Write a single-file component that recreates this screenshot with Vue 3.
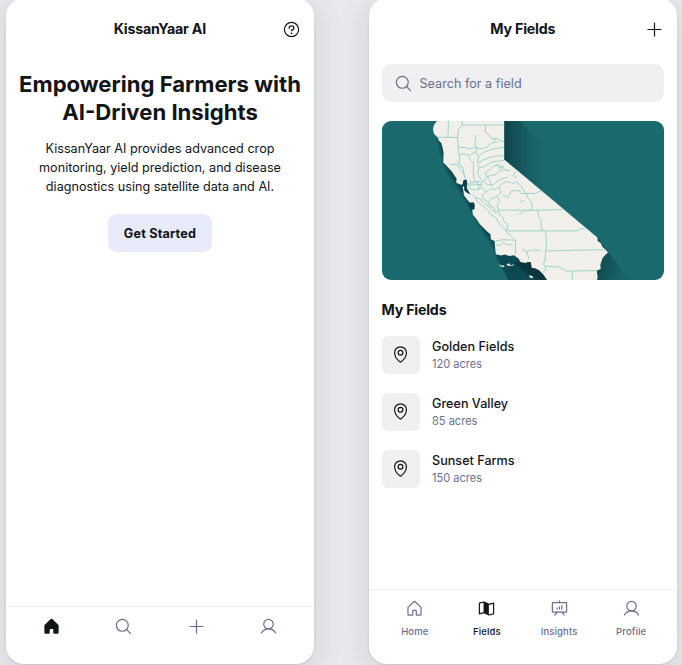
<script setup>
const fields = [
  { name: 'Golden Fields', size: '120 acres' },
  { name: 'Green Valley', size: '85 acres' },
  { name: 'Sunset Farms', size: '150 acres' },
]

// County borders, in the coordinate space of the map illustration
const borders = [
  'M220 18L218 67', 'M188 67H249', 'M262 18L259 34L250 42L247 65L249 100L254 135L252 145L263 160L270 190',
  'M259 30H387', 'M249 97H270L280 102L301 97', 'M301 60L302 75L298 86L305 98L302 110L310 125L307 145L312 158',
  'M331 30V52L343 62L350 72L366 70L377 78L387 80', 'M301 98L318 101L332 98L352 83L368 80',
  'M310 125L324 112L340 107L355 101L387 97', 'M311 143L326 134L345 126L364 123L387 122',
  'M312 158L329 154L344 144L362 138L387 136', 'M253 120L265 116L280 121L302 111',
  'M280 121L285 133L295 143L294 174L298 199', 'M225 148H246L252 161L263 170L270 190',
  'M246 137L262 160', 'M298 199H318L320 217L306 225L283 220L278 207L298 199L310 205V225',
  'M283 195L298 207L318 209', 'M312 158L306 174L316 190L325 199L336 185L329 174L343 165L355 153L369 150L387 160',
  'M325 199L335 207L347 211L359 205L371 195L388 189L398 186', 'M336 185L350 180L362 178L373 168L382 164L395 165L405 167',
  'M320 217L332 230L321 242L324 250L340 263L345 273L358 279L359 291L370 291',
  'M332 230L347 221L359 223L371 216L382 205L397 199L414 205L423 199L435 210L445 224L455 239L460 251L469 260L472 283',
  'M371 216L377 233L366 243L373 256L366 270L370 285H472', 'M382 240L399 247L407 230L419 225L436 228',
  'M435 235H481L490 230L498 228', 'M290 238L299 247L315 251L326 264L340 273L355 290',
  'M299 247L310 263L324 274L337 285L348 299L364 309L372 324L386 337L394 350L407 361L421 376V418',
  'M370 285L373 299L382 305L386 318L394 324L398 335L394 347H512', 'M432 296L440 292L448 286L562 283',
  'M488 283L490 302L498 315V331L502 347', 'M512 347H608L614 341H629', 'M512 347L514 384L510 435L505 446L513 460L505 471',
  'M362 377L378 374H407L421 376', 'M362 391L376 389L386 381L394 387L412 389', 'M512 407L690 403',
  'M510 453L553 455L572 467L665 466', 'M592 467V494', 'M441 401L456 410L461 431', 'M456 408L473 405H495',
  'M353 83L362 72', 'M366 145L373 160L387 151', 'M422 168L414 181L426 190', 'M435 260L448 255',
  'M336 185L345 199L347 211', 'M340 263L346 253L366 243', 'M279 207L291 211L302 207',
]
</script>

<template>
  <main class="canvas">
    <section class="phone">
      <header class="topbar">
        <h2 class="title">KissanYaar AI</h2>
        <svg class="icon action" viewBox="0 0 256 256">
          <circle cx="128" cy="128" r="96" />
          <circle class="solid" cx="128" cy="180" r="12" />
          <path d="M128 144v-8c17.670 0 32-12.540 32-28s-14.330-28-32-28-32 12.540-32 28v4" />
        </svg>
      </header>
      <h1 class="headline">Empowering Farmers with<br />AI-Driven Insights</h1>
      <p class="intro">KissanYaar AI provides advanced crop<br />monitoring, yield prediction, and disease<br />diagnostics using satellite data and AI.</p>
      <button class="cta">Get Started</button>
      <nav class="tabs compact">
        <div class="tab active">
          <svg class="icon filled" viewBox="0 0 256 256"><path d="M224 115.550V208a16 16 0 0 1-16 16h-40a16 16 0 0 1-16-16v-40a8 8 0 0 0-8-8h-32a8 8 0 0 0-8 8v40a16 16 0 0 1-16 16H48a16 16 0 0 1-16-16v-92.450a16 16 0 0 1 5.170-11.780l80-75.480a16 16 0 0 1 21.530 0l80 75.480A16 16 0 0 1 224 115.550Z" /></svg>
        </div>
        <div class="tab">
          <svg class="icon" viewBox="0 0 256 256"><circle cx="112" cy="112" r="80" /><path d="M168.570 168.570L224 224" /></svg>
        </div>
        <div class="tab">
          <svg class="icon" viewBox="0 0 256 256"><path d="M40 128H216M128 40V216" /></svg>
        </div>
        <div class="tab">
          <svg class="icon" viewBox="0 0 256 256"><circle cx="128" cy="96" r="64" /><path d="M32 216c19.370-33.470 54.550-56 96-56s76.630 22.530 96 56" /></svg>
        </div>
      </nav>
    </section>

    <section class="phone">
      <header class="topbar">
        <h2 class="title">My Fields</h2>
        <svg class="icon action" viewBox="0 0 256 256"><path d="M40 128H216M128 40V216" /></svg>
      </header>
      <div class="search">
        <svg class="icon" viewBox="0 0 256 256"><circle cx="112" cy="112" r="80" /><path d="M168.570 168.570L224 224" /></svg>
        <span>Search for a field</span>
      </div>
      <svg class="map" viewBox="20 18 849 476" preserveAspectRatio="none">
        <defs>
          <linearGradient id="eastShade" gradientUnits="userSpaceOnUse" x1="387" y1="0" x2="510" y2="0">
            <stop offset="0" stop-color="#0e444a" />
            <stop offset="0.25" stop-color="#145055" />
            <stop offset="0.6" stop-color="#186065" />
            <stop offset="1" stop-color="#19696d" />
          </linearGradient>
          <linearGradient id="southShade" gradientUnits="userSpaceOnUse" x1="665" y1="440" x2="755" y2="470">
            <stop offset="0" stop-color="#0f484e" />
            <stop offset="1" stop-color="#19666a" />
          </linearGradient>
          <filter id="soft" x="-10%" y="-10%" width="120%" height="120%"><feGaussianBlur stdDeviation="3" /></filter>
        </defs>
        <rect x="20" y="18" width="849" height="476" fill="#19696d" />
        <path d="M387 18H435L505 90V250L387 145Z" fill="url(#eastShade)" />
        <path d="M667 367L762 494H660Z" fill="url(#southShade)" />
        <path d="M184 62L209 155L244 212L275 258L306 321L353 390L372 440V330L270 190L205 90Z" fill="#0b3e46" opacity="0.75" filter="url(#soft)" />
        <path d="M358 400L372 440L400 494H520V400Z" fill="#0e4850" />
        <path d="M418 440L480 494H520V445Z" fill="#07363e" filter="url(#soft)" />
        <path d="M265 190H290V242L303 262V287L287 283L260 225Z" fill="#073e48" />
        <path
          fill="#f0efea"
          d="M185 18L176 30L173 42L176 56L188 68L190 76L198 84L202 98L205 112L204 142L212 150L222 161L231 171L238 182L244 190L243 203L255 208H262L265 195L274 193L276 202L275 219L281 230L286 238L275 233L267 225V214L262 214L264 224L266 240L276 254L283 262H296L299 270L297 284L291 283L293 299L304 312L314 327L324 337L334 347L346 357L347 372L358 377L360 400L362 417L378 421L388 418L403 422L416 420L430 430L436 440L452 443L457 440H467L470 458L480 459L492 465L505 478L516 494H666L668 485L665 466L677 461L676 449L682 430L690 420L699 412L690 401L683 395L677 383L668 377L667 367L435 173L387 133V18Z"
        />
        <path d="M370 447L380 451L387 450V455L378 454ZM393 449L401 444L407 450L416 447L414 451L399 451ZM461 480L471 482L475 489L465 487Z" fill="#f0efea" />
        <g class="borders"><path v-for="d in borders" :key="d" :d="d" /></g>
      </svg>
      <h3 class="section-title">My Fields</h3>
      <ul class="list">
        <li v-for="field in fields" :key="field.name" class="item">
          <div class="pin">
            <svg class="icon" viewBox="0 0 256 256"><circle cx="128" cy="104" r="32" /><path d="M208 104c0 72-80 128-80 128s-80-56-80-128a80 80 0 0 1 160 0Z" /></svg>
          </div>
          <div class="meta">
            <span class="name">{{ field.name }}</span>
            <span class="size">{{ field.size }}</span>
          </div>
        </li>
      </ul>
      <nav class="tabs">
        <div class="tab">
          <svg class="icon" viewBox="0 0 256 256"><path d="M152 208v-48a8 8 0 0 0-8-8h-32a8 8 0 0 0-8 8v48a8 8 0 0 1-8 8H48a8 8 0 0 1-8-8v-92.450a8 8 0 0 1 2.620-5.920l80-75.540a8 8 0 0 1 10.770 0l80 75.540a8 8 0 0 1 2.620 5.920V208a8 8 0 0 1-8 8h-48a8 8 0 0 1-8-8Z" /></svg>
          <span>Home</span>
        </div>
        <div class="tab active">
          <svg class="icon" viewBox="0 0 256 256"><path d="M96 184L32 200V56L96 40L160 72L224 56V200L160 216ZM96 40V184" /><path class="solid" d="M96 40L160 72V216L96 184Z" /></svg>
          <span>Fields</span>
        </div>
        <div class="tab">
          <svg class="icon" viewBox="0 0 256 256"><rect x="32" y="48" width="192" height="128" rx="8" /><path d="M160 176L192 216M96 176L64 216M96 120V136M128 104V136M160 88V136M128 48V24" /></svg>
          <span>Insights</span>
        </div>
        <div class="tab">
          <svg class="icon" viewBox="0 0 256 256"><circle cx="128" cy="96" r="64" /><path d="M32 216c19.370-33.470 54.550-56 96-56s76.630 22.530 96 56" /></svg>
          <span>Profile</span>
        </div>
      </nav>
    </section>
  </main>
</template>

<style>
body {
  margin: 0;
  background: #e8e9ed;
}
</style>

<style scoped>
* {
  box-sizing: border-box;
}
.canvas {
  display: flex;
  gap: 55px;
  width: 682px;
  height: 665px;
  padding-left: 6px;
  overflow: hidden;
  background: #e8e9ed;
  color: #121417;
  font-family: Inter, sans-serif;
}
.phone {
  display: flex;
  flex-direction: column;
  flex: none;
  width: 308px;
  height: 666px;
  margin-top: -2px;
  border-radius: 18px;
  background: #fff;
  box-shadow: 0 6px 30px rgba(30, 32, 50, 0.13), 0 1px 2px rgba(30, 32, 50, 0.1);
}
.icon {
  display: block;
  flex: none;
  width: 19px;
  height: 19px;
  fill: none;
  stroke: currentColor;
  stroke-width: 16;
  stroke-linecap: round;
  stroke-linejoin: round;
}
.filled,
.solid {
  fill: currentColor;
  stroke: none;
}
.topbar {
  display: grid;
  grid-template-columns: 38px 1fr 38px;
  align-items: center;
  height: 57px;
  padding: 6px 3.2px 0 2.8px;
}
.title {
  grid-column: 2;
  margin: 0 0 2px;
  text-align: center;
  font-size: 14.22px;
  font-weight: 700;
  line-height: 18px;
  letter-spacing: -0.21px;
}
.action {
  justify-self: center;
}
.headline {
  margin: 15px 0 0;
  text-align: center;
  font-size: 22.12px;
  font-weight: 700;
  line-height: 28px;
  white-space: nowrap;
}
.intro {
  margin: 13px 0 0;
  text-align: center;
  font-size: 12.64px;
  line-height: 19px;
}
.cta {
  align-self: center;
  width: 104px;
  height: 38px;
  margin-top: 18px;
  padding: 0;
  border: 0;
  border-radius: 9px;
  background: #e8ebfa;
  color: inherit;
  font: 700 12.64px Inter, sans-serif;
  letter-spacing: 0.19px;
}
.tabs {
  display: flex;
  height: 75px;
  margin-top: auto;
  padding: 9px 9.8px 0 9.8px;
  border-top: 1px solid #f0f0f4;
}
.tabs.compact {
  height: 58px;
  padding-top: 9.5px;
}
.tab {
  display: flex;
  flex: 1;
  flex-direction: column;
  align-items: center;
  gap: 7px;
  color: #6a6f8e;
  font-size: 9.5px;
  font-weight: 500;
  line-height: 14px;
  letter-spacing: 0.14px;
}
.active {
  color: #121417;
}
.search {
  display: flex;
  align-items: center;
  gap: 6.5px;
  height: 38px;
  margin: 9px 13px 0 12.5px;
  padding-left: 12.5px;
  border-radius: 9px;
  background: #f0f0f3;
  color: #6a6f8e;
  font-size: 12.64px;
}
.map {
  display: block;
  flex: none;
  width: 282.600px;
  height: 159px;
  margin: 19px 13px 0 12.5px;
  border-radius: 9px;
}
.borders {
  fill: none;
  stroke: #98d4c6;
  stroke-width: 2.8;
  stroke-linejoin: round;
}
.section-title {
  margin: 20px 12.5px 0;
  font-size: 14.22px;
  line-height: 20px;
  font-weight: 700;
  letter-spacing: -0.21px;
}
.list {
  display: flex;
  flex-direction: column;
  gap: 19px;
  margin: 15.600px 12.5px 0;
  padding: 0;
  list-style: none;
}
.item {
  display: flex;
  align-items: center;
  gap: 12.5px;
  height: 38px;
}
.pin {
  display: grid;
  place-items: center;
  width: 38px;
  height: 38px;
  border-radius: 6px;
  background: #f0f0f3;
}
.meta {
  display: flex;
  flex-direction: column;
  padding-bottom: 0.6px;
}
.name {
  font-size: 12.64px;
  font-weight: 500;
  line-height: 19px;
}
.size {
  color: #6a6f8e;
  font-size: 11.06px;
  line-height: 16px;
}
</style>
